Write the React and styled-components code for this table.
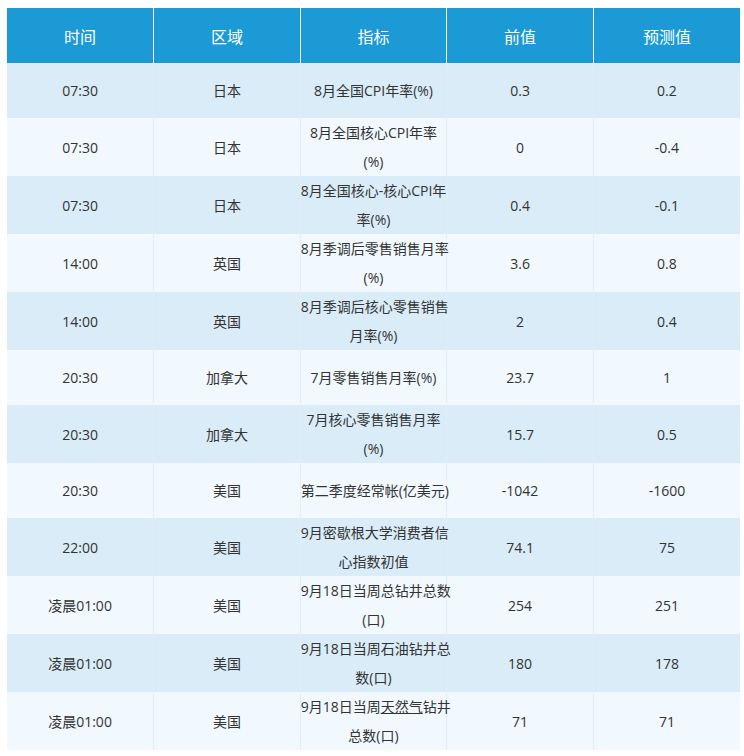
import React from "react";
import styled, { createGlobalStyle } from "styled-components";

const Global = createGlobalStyle`
  html, body { margin: 0; padding: 0; background: #ffffff; }
  body { font-family: "Open Sans", "Noto Sans CJK SC", sans-serif; }
`;

const Page = styled.div`
  padding: 8px 4px 0 7px;
`;

const Table = styled.table`
  width: 733px;
  border-collapse: collapse;
  table-layout: fixed;
`;

const HeadCell = styled.th`
  height: 55px;
  padding: 0;
  background: #1b9ad6;
  color: #ffffff;
  font-size: 16px;
  font-weight: 400;
  text-align: center;
  vertical-align: middle;
  border-right: 1px solid #ffffff;
  &:last-child { border-right: none; }
`;

const Row = styled.tr`
  background: ${(p) => (p.$odd ? "#d9ecf7" : "#f1f8fe")};
`;

const Cell = styled.td`
  height: 55px;
  padding: 0;
  color: #333333;
  font-size: 14px;
  line-height: 29px;
  text-align: center;
  vertical-align: middle;
  border-right: 1px solid #e3eff8;
  &:last-child { border-right: none; }
`;

const Line = styled.span`
  display: block;
  white-space: nowrap;
`;

const Link = styled.span`
  text-decoration: underline;
`;

const rows = [
  ["07:30", "日本", ["8月全国CPI年率(%)"], "0.3", "0.2"],
  ["07:30", "日本", ["8月全国核心CPI年率", "(%)"], "0", "-0.4"],
  ["07:30", "日本", ["8月全国核心-核心CPI年", "率(%)"], "0.4", "-0.1"],
  ["14:00", "英国", ["8月季调后零售销售月率", "(%)"], "3.6", "0.8"],
  ["14:00", "英国", ["8月季调后核心零售销售", "月率(%)"], "2", "0.4"],
  ["20:30", "加拿大", ["7月零售销售月率(%)"], "23.7", "1"],
  ["20:30", "加拿大", ["7月核心零售销售月率", "(%)"], "15.7", "0.5"],
  ["20:30", "美国", ["第二季度经常帐(亿美元)"], "-1042", "-1600"],
  ["22:00", "美国", ["9月密歇根大学消费者信", "心指数初值"], "74.1", "75"],
  ["凌晨01:00", "美国", ["9月18日当周总钻井总数", "(口)"], "254", "251"],
  ["凌晨01:00", "美国", ["9月18日当周石油钻井总", "数(口)"], "180", "178"],
  [
    "凌晨01:00",
    "美国",
    [
      <>
        9月18日当周<Link>天然气</Link>钻井
      </>,
      "总数(口)",
    ],
    "71",
    "71",
  ],
];

const headers = ["时间", "区域", "指标", "前值", "预测值"];

export default function App() {
  return (
    <Page>
      <Global />
      <Table>
        <thead>
          <tr>
            {headers.map((h) => (
              <HeadCell key={h}>{h}</HeadCell>
            ))}
          </tr>
        </thead>
        <tbody>
          {rows.map((r, i) => (
            <Row key={i} $odd={i % 2 === 0}>
              <Cell>{r[0]}</Cell>
              <Cell>{r[1]}</Cell>
              <Cell>
                {r[2].map((l, j) => (
                  <Line key={j}>{l}</Line>
                ))}
              </Cell>
              <Cell>{r[3]}</Cell>
              <Cell>{r[4]}</Cell>
            </Row>
          ))}
        </tbody>
      </Table>
    </Page>
  );
}
